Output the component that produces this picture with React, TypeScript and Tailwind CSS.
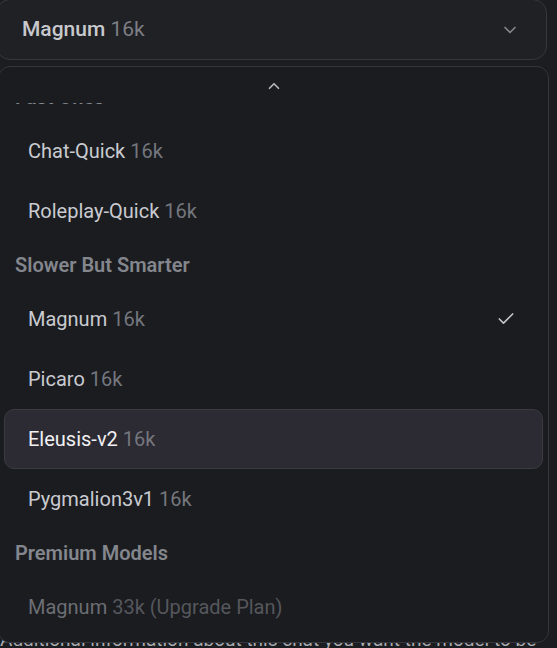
import { ChevronDown, ChevronUp, Check } from 'lucide-react';

type Item = { name: string; ctx: string; note?: string; selected?: boolean; active?: boolean; disabled?: boolean };

const groups: { label: string; items: Item[] }[] = [
  {
    label: 'Fast Ones',
    items: [
      { name: 'Chat-Quick', ctx: '16k' },
      { name: 'Roleplay-Quick', ctx: '16k' },
    ],
  },
  {
    label: 'Slower But Smarter',
    items: [
      { name: 'Magnum', ctx: '16k', selected: true },
      { name: 'Picaro', ctx: '16k' },
      { name: 'Eleusis-v2', ctx: '16k', active: true },
      { name: 'Pygmalion3v1', ctx: '16k' },
    ],
  },
  {
    label: 'Premium Models',
    items: [{ name: 'Magnum', ctx: '33k', note: '(Upgrade Plan)', disabled: true }],
  },
];

export default function App() {
  return (
    <div
      className="w-[557px] h-[648px] overflow-hidden bg-[#1c1d21] relative"
      style={{ fontFamily: 'Roboto, "Liberation Sans", sans-serif' }}
    >
      {/* text behind the open menu */}
      <div className="absolute left-0 top-[626px] text-[19px] text-[#a9abb0] whitespace-nowrap">
        Additional information about this chat you want the model to be
      </div>

      {/* trigger */}
      <div className="relative -ml-[4px] -mt-px w-[551px] h-[61px] rounded-[14px] border border-[#37383d] bg-[#202125] flex items-center pl-[25px] pr-[26px]">
        <span className="text-[21px] font-medium text-[#c8c9cd]">
          Magnum <span className="font-normal text-[#7c7e84]">16k</span>
        </span>
        <ChevronDown className="ml-auto w-[20px] h-[20px] text-[#85878d]" strokeWidth={2} />
      </div>

      {/* menu */}
      <div className="absolute left-[-2px] top-[66px] w-[551px] h-[577px] rounded-[12px] border border-[#35363b] bg-[#1b1c20] overflow-hidden flex flex-col">
        <div className="h-[36px] shrink-0 flex items-center justify-center">
          <ChevronUp className="w-[18px] h-[18px] text-[#b5b6ba] mt-[2px]" strokeWidth={2.25} />
        </div>
        <div className="flex-1 overflow-hidden px-[5px]">
          <div className="-mt-[30px]">
            {groups.map((g) => (
              <div key={g.label}>
                <div className="h-[48px] flex items-center pl-[11px] text-[20px] font-semibold text-[#83868c]">
                  {g.label}
                </div>
                {g.items.map((it, i) => (
                  <div
                    key={i}
                    className={`h-[60px] flex items-center pl-[23px] pr-[26px] rounded-[10px] border text-[20px] ${
                      it.active ? 'bg-[#2c2a32] border-[#3a3a40]' : 'border-transparent'
                    }`}
                  >
                    <span
                      className={
                        it.disabled ? 'text-[#6c6e73]' : it.active ? 'text-[#f1f1f3]' : 'text-[#c9cbd0]'
                      }
                    >
                      {it.name}{' '}
                      <span className={it.disabled ? 'text-[#55575c]' : 'text-[#74777d]'}>
                        {it.ctx}
                        {it.note ? ` ${it.note}` : ''}
                      </span>
                    </span>
                    {it.selected && <Check className="ml-auto w-[20px] h-[20px] text-[#c3c4c8]" strokeWidth={2} />}
                  </div>
                ))}
              </div>
            ))}
          </div>
        </div>
      </div>
    </div>
  );
}
